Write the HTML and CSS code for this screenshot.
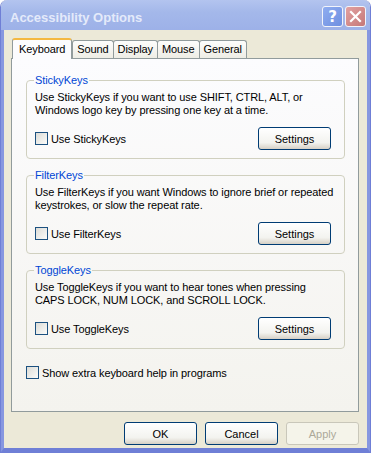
FILE: index.html
```html
<!DOCTYPE html>
<html lang="en">
<head>
  <meta charset="UTF-8">
  <title>Accessibility Options</title>
  <link rel="stylesheet" href="styles.css">
</head>
<body>
  <div class="window">
    <div class="titlebar">
      <span class="title">Accessibility Options</span>
      <div class="caption-buttons">
        <span class="cap-btn help">?</span>
        <span class="cap-btn close">
          <svg width="13" height="13" viewBox="0 0 13 13"><path d="M2 2 L11 11 M11 2 L2 11" stroke="#fff" stroke-width="2.2" stroke-linecap="square"/></svg>
        </span>
      </div>
    </div>

    <div class="client">
      <div class="tabs">
        <div class="tab active">Keyboard</div>
        <div class="tab">Sound</div>
        <div class="tab">Display</div>
        <div class="tab">Mouse</div>
        <div class="tab">General</div>
      </div>

      <div class="panel">
        <fieldset class="group">
          <legend>StickyKeys</legend>
          <p>Use StickyKeys if you want to use SHIFT, CTRL, ALT, or<br>Windows logo key by pressing one key at a time.</p>
          <div class="row">
            <label class="check"><span class="box"></span>Use StickyKeys</label>
            <button class="btn">Settings</button>
          </div>
        </fieldset>

        <fieldset class="group">
          <legend>FilterKeys</legend>
          <p>Use FilterKeys if you want Windows to ignore brief or repeated<br>keystrokes, or slow the repeat rate.</p>
          <div class="row">
            <label class="check"><span class="box"></span>Use FilterKeys</label>
            <button class="btn">Settings</button>
          </div>
        </fieldset>

        <fieldset class="group">
          <legend>ToggleKeys</legend>
          <p>Use ToggleKeys if you want to hear tones when pressing<br>CAPS LOCK, NUM LOCK, and SCROLL LOCK.</p>
          <div class="row">
            <label class="check"><span class="box"></span>Use ToggleKeys</label>
            <button class="btn">Settings</button>
          </div>
        </fieldset>

        <label class="check extra"><span class="box"></span>Show extra keyboard help in programs</label>
      </div>

      <div class="footer">
        <button class="btn">OK</button>
        <button class="btn">Cancel</button>
        <button class="btn" disabled>Apply</button>
      </div>
    </div>
  </div>
</body>
</html>
```

FILE: styles.css
```css
body {
  margin: 0;
  background: #ffffff;
  font-family: 'Liberation Sans', Arial, sans-serif;
  font-size: 11px;
  letter-spacing: -0.1px;
  color: #000;
}
.window {
  width: 371px;
  height: 453px;
  box-sizing: border-box;
  background: #ece9d8;
  border: 1px solid #6f7fd6;
  border-top: none;
  border-radius: 7px 7px 0 0;
  overflow: hidden;
  display: flex;
  flex-direction: column;
}
.titlebar {
  height: 30px;
  flex: none;
  display: flex;
  align-items: center;
  justify-content: space-between;
  padding: 0 4px 0 9px;
  background: linear-gradient(#b3c4ef, #a4b8ea 40%, #9db1e8);
}
.title {
  font-weight: bold;
  font-size: 13px;
  letter-spacing: 0;
  color: #e4eafa;
  padding-top: 4px;
}
.caption-buttons {
  display: flex;
  gap: 2px;
  padding-top: 3px;
}
.cap-btn {
  width: 19px;
  height: 19px;
  border: 1px solid #f2f4fb;
  border-radius: 3px;
  display: flex;
  align-items: center;
  justify-content: center;
  color: #fff;
  font-family: 'DejaVu Sans', sans-serif;
  font-weight: bold;
  font-size: 15px;
}
.cap-btn.help {
  background: linear-gradient(135deg, #8fadf0, #6f8fe0);
}
.cap-btn.close {
  background: linear-gradient(135deg, #e2a1a1, #c57878);
}
.client {
  flex: 1;
  display: flex;
  flex-direction: column;
  padding: 8px 8px 0 7px;
  border-left: 3px solid #8797e0;
  border-right: 3px solid #8797e0;
  border-bottom: 4px solid #6f7fd6;
}
.tabs {
  display: flex;
  align-items: flex-end;
  height: 20px;
  flex: none;
  padding-left: 1px;
  position: relative;
  z-index: 1;
}
.tab {
  height: 18px;
  line-height: 17px;
  padding: 0 4px;
  box-sizing: border-box;
  background: linear-gradient(#fdfdfc, #eeede5);
  border: 1px solid #919b9c;
  border-bottom: none;
  border-radius: 3px 3px 0 0;
  margin-left: -1px;
}
.tab.active {
  height: 21px;
  line-height: 19px;
  padding: 0 6px;
  background: #fcfcfe;
  border-top: 2px solid #f4b842;
  margin-bottom: -1px;
  margin-left: 0;
  margin-right: 1px;
  position: relative;
  z-index: 1;
}
.panel {
  height: 354px;
  flex: none;
  box-sizing: border-box;
  background: linear-gradient(#fcfcfe, #f4f3ee);
  border: 1px solid #919b9c;
  padding: 15px 13px 0 14px;
  display: flex;
  flex-direction: column;
  gap: 10px;
}
.group {
  margin: 0;
  border: 1px solid #d0d0bf;
  border-radius: 4px;
  padding: 5px 13px 8px 7px;
}
.group legend {
  color: #0046d5;
  padding: 0 1px;
  margin-left: 0;
}
.group p {
  margin: 0 -12px 10px 1px;
  line-height: 13px;
  white-space: nowrap;
}
.row {
  display: flex;
  justify-content: space-between;
  align-items: center;
}
.check {
  display: flex;
  align-items: center;
  gap: 3px;
  padding-left: 1px;
}
.box {
  width: 11px;
  height: 11px;
  border: 1px solid #1c5180;
  background: linear-gradient(135deg, #dcdcd7, #fbfbf9);
}
.extra {
  margin-top: 7px;
  padding-left: 0;
}
.btn {
  width: 73px;
  height: 23px;
  font-family: inherit;
  font-size: 11px;
  color: #000;
  border: 1px solid #003c74;
  border-radius: 3px;
  background: linear-gradient(#ffffff, #f3f3ef 70%, #d6d0c5);
  padding: 0;
}
.btn:disabled {
  color: #aca899;
  border-color: #c9c7ba;
  background: #f5f4ea;
}
.footer {
  display: flex;
  justify-content: flex-end;
  gap: 8px;
  padding-top: 10px;
}
```
